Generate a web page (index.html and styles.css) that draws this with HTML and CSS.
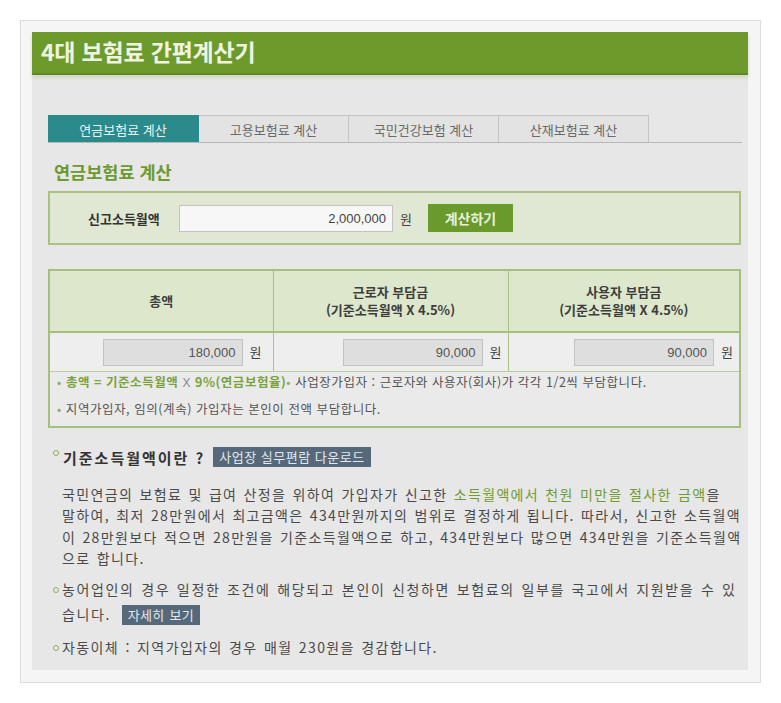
FILE: index.html
```html
<!DOCTYPE html>
<html lang="ko">
<head>
<meta charset="utf-8">
<title>4대 보험료 간편계산기</title>
<link rel="stylesheet" href="styles.css">
</head>
<body>
<div class="frame">
  <div class="panel">
    <div class="head"><h1>4대 보험료 간편계산기</h1></div>
    <div class="body">
      <ul class="tabs">
        <li class="on">연금보험료 계산</li>
        <li>고용보험료 계산</li>
        <li>국민건강보험 계산</li>
        <li>산재보험료 계산</li>
      </ul>
      <h2 class="sec">연금보험료 계산</h2>
      <div class="inbox">
        <span class="lbl">신고소득월액</span>
        <span class="field wide">2,000,000</span>
        <span class="won">원</span>
        <span class="calc">계산하기</span>
      </div>
      <table class="res">
        <tr class="th">
          <th class="c1">총액</th>
          <th class="c2">근로자 부담금<br>(기준소득월액 X 4.5%)</th>
          <th class="c3">사용자 부담금<br>(기준소득월액 X 4.5%)</th>
        </tr>
        <tr class="vals">
          <td><span class="field">180,000</span><span class="won">원</span></td>
          <td><span class="field">90,000</span><span class="won">원</span></td>
          <td><span class="field">90,000</span><span class="won">원</span></td>
        </tr>
        <tr class="notes">
          <td colspan="3">
            <p><span class="dot">•</span> <b class="g">총액 = 기준소득월액</b> <span class="x">X</span> <b class="g">9%(연금보험율)</b><span class="dot">•</span> 사업장가입자 : 근로자와 사용자(회사)가 각각 1/2씩 부담합니다.</p>
            <p><span class="dot">•</span> 지역가입자, 임의(계속) 가입자는 본인이 전액 부담합니다.</p>
          </td>
        </tr>
      </table>
      <div class="info">
        <div class="q"><span class="ring top"></span><b>기준소득월액이란 ?</b><span class="dark">사업장 실무편람 다운로드</span></div>
        <p class="desc">국민연금의 보험료 및 급여 산정을 위하여 가입자가 신고한 <span class="gt">소득월액에서 천원 미만을 절사한 금액</span>을<br>말하여, 최저 28만원에서 최고금액은 434만원까지의 범위로 결정하게 됩니다. 따라서, 신고한 소득월액<br>이 28만원보다 적으면 28만원을 기준소득월액으로 하고, 434만원보다 많으면 434만원을 기준소득월액<br>으로 합니다.</p>
        <p class="bl"><span class="ring"></span>농어업인의 경우 일정한 조건에 해당되고 본인이 신청하면 보험료의 일부를 국고에서 지원받을 수 있<br><span class="cont">습니다. <span class="dark small">자세히 보기</span></span></p>
        <p class="bl last"><span class="ring"></span>자동이체 : 지역가입자의 경우 매월 230원을 경감합니다.</p>
      </div>
    </div>
  </div>
</div>
</body>
</html>
```
FILE: styles.css
```css
* { box-sizing: border-box; }
html, body { margin: 0; padding: 0; background: #fff; }
body { font-family: "Noto Sans CJK KR", "Noto Sans", sans-serif; color: #444; }

.frame {
  margin: 20px 0 0 20px;
  width: 741px;
  height: 663px;
  background: #f5f5f5;
  border: 1px solid #dcdcdc;
  padding: 11px 12px 12px 11px;
}
.panel {
  width: 716px;
  height: 638px;
  background: #e7e7e7;
}
.head {
  height: 43px;
  background: #6d9b2b;
  border-bottom: 2px solid #5f8a22;
  box-shadow: 0 3px 3px #d3d8cb;
  padding: 2px 0 0 9px;
}
.head h1 {
  margin: 0;
  font-size: 23px;
  font-weight: 700;
  color: #eef3e2;
  letter-spacing: -0.2px;
  line-height: 34px;
}
.body { padding: 40px 7px 0 16px; }

.tabs {
  list-style: none;
  margin: 0;
  padding: 0;
  display: flex;
  border-bottom: 1px solid #b8b8b8;
  width: 694px;
}
.tabs li {
  width: 150px;
  height: 27px;
  line-height: 27px;
  text-align: center;
  font-size: 13px;
  color: #6a6a6a;
  background: #e3e3e3;
  border: 1px solid #c4c4c4;
  border-bottom: none;
  border-left: none;
}
.tabs li.on {
  width: 151px;
  background: #2b8a8c;
  color: #e6f4f4;
  border-color: #2b8a8c;
}

.sec {
  margin: 16px 0 0 6px;
  font-size: 17.5px;
  font-weight: 700;
  color: #6b9a2f;
  line-height: 25px;
  height: 25px;
}
.inbox {
  margin-top: 7px;
  width: 693px;
  height: 54px;
  background: #e0e8d3;
  border: 2px solid #a9c284;
  display: flex;
  align-items: center;
  padding-left: 38px;
}
.lbl { font-size: 13px; font-weight: 700; color: #333; width: 91px; }
.field {
  display: inline-block;
  width: 140px;
  height: 27px;
  line-height: 25px;
  background: #dedede;
  border: 1px solid #c2c2c2;
  text-align: right;
  padding-right: 6px;
  font-size: 13px;
  color: #555;
  font-family: "Liberation Sans", sans-serif;
}
.field.wide { width: 214px; background: #f7f7f7; color: #444; }
.won { font-size: 13px; color: #444; margin-left: 7px; }
.inbox .won { margin-right: 16px; }
.calc {
  width: 85px;
  height: 28px;
  line-height: 28px;
  background: #6b9a2c;
  color: #e8f0dc;
  font-size: 14px;
  font-weight: 700;
  text-align: center;
}

.res {
  margin-top: 24px;
  width: 693px;
  border-collapse: collapse;
  border: 2px solid #a5bf7f;
}
.res th, .res td { padding: 0; }
.th th {
  height: 62px;
  background: #dce7cb;
  font-size: 13px;
  font-weight: 700;
  color: #3d3d3d;
  line-height: 18px;
  border: 1px solid #a9c285;
  border-bottom: 2px solid #a5bf7f;
}
.c1 { width: 224px; }
.c2 { width: 235px; }
.vals td {
  height: 39px;
  background: #eeeeee;
  text-align: right;
  padding-right: 6px;
  border-left: 1px solid #a9c285;
  border-bottom: 1px solid #b9cb9f;
  white-space: nowrap;
}
.vals td:first-child { padding-right: 11px; }
.notes td {
  height: 56px;
  background: #eaeaea;
  padding: 0 0 0 7px;
  vertical-align: top;
}
.notes p {
  margin: 0;
  font-size: 12.5px;
  line-height: 26px;
  color: #555;
  letter-spacing: 0.55px;
}
.notes p:first-child { margin-top: -3px; }
.dot { color: #8db05a; }
.g { color: #79a33d; }
.x { color: #888; font-family: "Liberation Sans", sans-serif; font-size: 12px; }

.info { padding: 19px 0 0 5px; }
.q { display: flex; align-items: center; height: 20px; }
.q b { font-size: 15px; color: #333; letter-spacing: 2px; }
.ring {
  display: inline-block;
  width: 6px;
  height: 6px;
  border: 1.5px solid #8db05a;
  border-radius: 50%;
  margin-right: 3px;
  vertical-align: middle;
  position: relative;
  top: -1px;
}
.ring.top { align-self: flex-start; margin-top: 3px; margin-right: 4px; top: 0; }
.dark {
  display: inline-block;
  background: #56697a;
  color: #e2e8ee;
  font-size: 13px;
  padding: 0 6px;
  height: 20px;
  line-height: 20px;
  margin-left: 8px;
  letter-spacing: 0.5px;
}
.desc {
  margin: 17px 0 0 9px;
  font-size: 14px;
  line-height: 21.3px;
  color: #4a4a4a;
  letter-spacing: 1.35px;
  word-spacing: 1px;
  white-space: nowrap;
}
.gt { color: #6e9c33; }
.bl {
  margin: 8px 0 0 0;
  font-size: 14px;
  line-height: 25px;
  color: #4a4a4a;
  letter-spacing: 1.65px;
  word-spacing: 1px;
  white-space: nowrap;
}
.cont { padding-left: 9px; }
.dark.small { font-size: 13px; margin-left: 4px; height: 20px; line-height: 20px; letter-spacing: 0.3px; }
.bl.last { margin-top: 8px; letter-spacing: 1.4px; }
```
